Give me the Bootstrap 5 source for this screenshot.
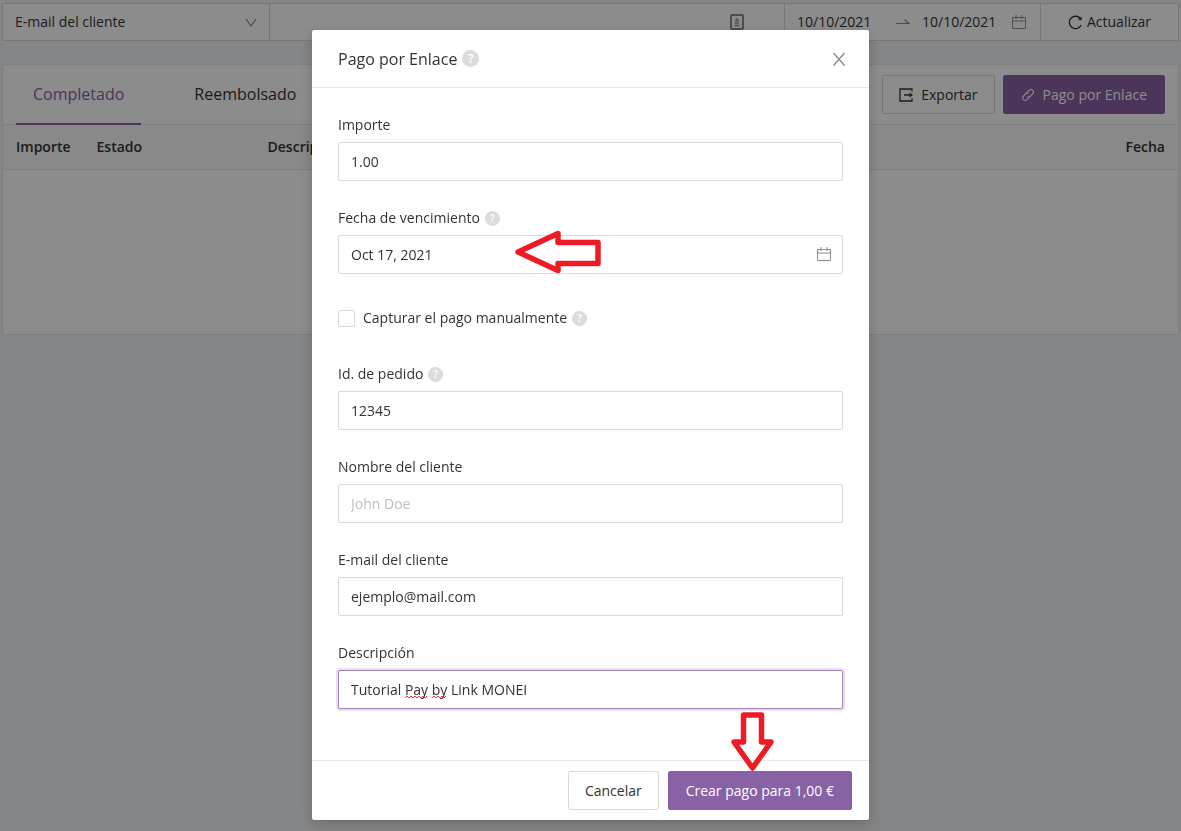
<!DOCTYPE html>
<html lang="es">
<head>
<meta charset="utf-8">
<meta name="viewport" content="width=device-width, initial-scale=1">
<title>Pago por Enlace</title>
<link href="https://cdn.jsdelivr.net/npm/bootstrap@5.3.0/dist/css/bootstrap.min.css" rel="stylesheet">
<style>
  :root { --brand: #8961a5; --line: #d9d9d9; --soft: #e8e8e8; --ink: #333; }
  body { background: #f0f2f5; color: var(--ink); font-family: "Open Sans", "Noto Sans", sans-serif; font-size: 14px; line-height: 24px; min-height: 100vh; }
  svg { display: block; flex: none; fill: none; stroke: currentColor; }
  .page-area { padding: 3px 2px; }

  /* Filter bar */
  .filter-bar { border: 1px solid var(--line); background: #fff; height: 38px; margin-bottom: 23px; }
  .filter-bar > * + * { border-left: 1px solid var(--line) !important; }
  .filter-bar input, .filter-bar select { border: 0; background: transparent; color: inherit; outline: 0; appearance: none; }
  .filter-field { width: 266px; }
  .filter-field select { padding: 0 12px; }
  .filter-field svg { position: absolute; right: 12px; top: 13px; color: #8c8c8c; pointer-events: none; }
  .filter-search { padding-right: 40px; }
  .filter-dates { width: 256px; padding: 0 12px; }
  .filter-dates input { width: 82px; padding: 0; }
  .filter-dates .range-arrow { margin: 0 12px 0 17px; }
  .filter-refresh { width: 138px; border: 0; background: transparent; color: inherit; }
  .grey-icon { color: #8c8c8c; }

  /* Payments panel */
  .panel { background: #fff; border: 1px solid var(--soft); border-radius: 2px; height: 271px; }
  .panel-head { border-bottom: 1px solid var(--soft); height: 60px; padding: 0 13px; }
  .tab-links { gap: 36px; }
  .tab-links a { color: inherit; font-size: 16px; line-height: 58px; padding: 0 17px; border-bottom: 2px solid transparent; text-decoration: none; }
  .tab-links a.active { color: var(--brand); border-color: var(--brand); }
  .pay-table th { background: #fafafa; border-bottom: 1px solid var(--soft); font-weight: 600; font-size: 14px; padding: 10px 13px; color: var(--ink); }
  .col-amount { width: 80px; }
  .col-state { width: 171px; }

  .btn-box { height: 39px; padding: 0 16px; border: 1px solid var(--line); border-radius: 2px; background: #fff; color: var(--ink); font-size: 14px; line-height: 24px; }
  .btn-box.solid, .btn-box.solid:hover { padding: 0 17px; background: var(--brand); border-color: var(--brand); color: #fff; }

  /* Dialog */
  .modal-backdrop { --bs-backdrop-opacity: .45; }
  .modal-dialog { max-width: 557px; margin: 30px auto 0; }
  .modal-content { border: 0; border-radius: 2px; color: var(--ink); box-shadow: 0 4px 14px rgba(0,0,0,.2); }
  .modal-header { height: 58px; padding: 0 23px 0 26px; border-color: var(--soft); border-radius: 0; }
  .modal-title { font-size: 16px; font-weight: 500; line-height: 24px; }
  .close-x { border: 0; background: transparent; padding: 0; color: #8c8c8c; }
  .modal-body { padding: 25px 26px 26px; }
  .modal-footer { padding: 10px 17px; gap: 9px; border-color: var(--soft); }
  .modal-footer > * { margin: 0; }
  .field { margin-bottom: 25px; }
  .field label { display: block; }
  .field .form-control { height: 39px; margin-top: 5px; padding: 0 12px; border: 1px solid var(--line); border-radius: 2px; font-size: 14px; color: var(--ink); box-shadow: none; }
  .field .form-control::placeholder { color: #bfbfbf; }
  .field .form-control.current { border-color: #a383b8; box-shadow: 0 0 0 2px rgba(137,97,165,.2); }
  .field-row { height: 38px; }
  .field-row .form-check-input { width: 17px; height: 17px; margin: 0; border: 1px solid var(--line); border-radius: 2px; }
  .hint { display: inline-flex; align-items: center; justify-content: center; width: 15px; height: 15px; border-radius: 50%; background: #dcdcdc; color: #fff; font-size: 10px; font-weight: 600; line-height: 15px; flex: none; margin-left: 1px; }
  .hint.large { width: 17px; height: 17px; font-size: 12px; }
  .date-icon { position: absolute; right: 12px; bottom: 13px; color: #8c8c8c; }
  .spelling { position: absolute; left: 67px; bottom: 10px; color: #f33; }
  .pointer-left { position: absolute; left: 176px; bottom: 0; color: #ed1c24; }
  .pointer-down { position: absolute; right: 95px; bottom: 49px; color: #ed1c24; }
</style>
</head>
<body>
<main class="page-area">
  <form class="filter-bar d-flex">
    <div class="filter-field position-relative">
      <select class="w-100 h-100" aria-label="Buscar por"><option>E-mail del cliente</option></select>
      <svg width="12" height="12" viewBox="0 0 12 12" stroke-width="1.2"><path d="M1 2l5 7 5-7"/></svg>
    </div>
    <div class="filter-search flex-fill d-flex align-items-center">
      <input class="flex-fill h-100 px-2" type="text" aria-label="Texto de búsqueda">
      <svg class="grey-icon" width="14" height="16" viewBox="0 0 14 16"><rect x="1" y="1" width="12" height="14" rx="1" stroke-width="2"/><path d="M7 4v3M5 6.500h4M5 9h4M4.500 11.500h5" stroke-width="1.400"/></svg>
    </div>
    <div class="filter-dates d-flex align-items-center">
      <input type="text" value="10/10/2021" aria-label="Desde">
      <svg class="grey-icon range-arrow" width="14" height="10" viewBox="0 0 14 10" stroke-width="1.200"><path d="M0 6.500h13L8.500 2.500"/></svg>
      <input type="text" value="10/10/2021" aria-label="Hasta">
      <svg class="grey-icon ms-2" width="14" height="14" viewBox="0 0 14 14"><path d="M.5 2.500h13v11H.5zM.5 6h13M4 0v4M10 0v4"/></svg>
    </div>
    <button class="filter-refresh d-flex align-items-center justify-content-center gap-1" type="button">
      <svg width="15" height="15" viewBox="0 0 15 15" stroke-width="1.400"><path d="M12.600 3.800A6.200 6.200 0 1 0 13.200 10"/><path d="M13.700 1.500l-.2 4-3.600-1.100z" fill="currentColor" stroke="none"/></svg>
      Actualizar
    </button>
  </form>

  <section class="panel">
    <div class="panel-head d-flex align-items-center justify-content-between">
      <nav class="tab-links d-flex">
        <a class="active" href="#">Completado</a>
        <a href="#">Reembolsado</a>
      </nav>
      <div class="d-flex gap-2">
        <button class="btn btn-box d-flex align-items-center gap-2" type="button">
          <svg width="14" height="14" viewBox="0 0 14 14" stroke-width="1.300"><path d="M13 3.500V1H1v12h12v-2.500M5 7h7"/><path d="M10.500 4.500L14 7l-3.500 2.500z" fill="currentColor" stroke="none"/></svg>
          Exportar
        </button>
        <button class="btn btn-box solid d-flex align-items-center gap-2" type="button">
          <svg width="14" height="14" viewBox="0 0 14 14" stroke-width="1.100"><path d="M5.200 5.200L8 2.400a2.500 2.500 0 0 1 3.600 3.600L9.400 8.200a2.500 2.500 0 0 1-3 .4M8.800 8.800L6 11.600A2.500 2.500 0 0 1 2.400 8l2.200-2.200a2.500 2.500 0 0 1 3-.4"/></svg>
          Pago por Enlace
        </button>
      </div>
    </div>
    <table class="pay-table w-100">
      <colgroup><col class="col-amount"><col class="col-state"><col><col></colgroup>
      <thead><tr><th scope="col">Importe</th><th scope="col">Estado</th><th scope="col">Descripción</th><th scope="col" class="text-end">Fecha</th></tr></thead>
    </table>
  </section>
</main>

<div class="modal-backdrop show"></div>
<div class="modal d-block" role="dialog" aria-modal="true" aria-labelledby="dialogTitle">
  <div class="modal-dialog">
    <form class="modal-content">
      <div class="modal-header">
        <div class="d-flex align-items-center gap-1">
          <h1 class="modal-title" id="dialogTitle">Pago por Enlace</h1>
          <span class="hint large">?</span>
        </div>
        <button class="close-x" type="button" aria-label="Cerrar">
          <svg width="14" height="14" viewBox="0 0 14 14" stroke-width="1.400"><path d="M1.500 1l11 12.500M12.500 1l-11 12.500"/></svg>
        </button>
      </div>
      <div class="modal-body">
        <div class="field">
          <label for="amount">Importe</label>
          <input class="form-control" id="amount" type="text" value="1.00">
        </div>
        <div class="field position-relative">
          <div class="d-flex align-items-center gap-1"><label for="due">Fecha de vencimiento</label><span class="hint">?</span></div>
          <input class="form-control" id="due" type="text" value="Oct 17, 2021">
          <svg class="date-icon" width="14" height="14" viewBox="0 0 14 14"><path d="M.5 2.500h13v11H.5zM.5 6h13M4 0v4M10 0v4"/></svg>
          <svg class="pointer-left" width="90" height="46" viewBox="0 0 90 46" stroke-width="5.500" stroke-linejoin="round"><path d="M4 24L44 5.500V14.500H84V35.500H44V42.500Z"/></svg>
        </div>
        <div class="field field-row d-flex align-items-center">
          <input class="form-check-input me-2" id="manual" type="checkbox">
          <label class="me-1" for="manual">Capturar el pago manualmente</label><span class="hint">?</span>
        </div>
        <div class="field">
          <div class="d-flex align-items-center gap-1"><label for="order">Id. de pedido</label><span class="hint">?</span></div>
          <input class="form-control" id="order" type="text" value="12345">
        </div>
        <div class="field">
          <label for="client">Nombre del cliente</label>
          <input class="form-control" id="client" type="text" placeholder="John Doe">
        </div>
        <div class="field">
          <label for="mail">E-mail del cliente</label>
          <input class="form-control" id="mail" type="email" value="ejemplo@mail.com">
        </div>
        <div class="field position-relative">
          <label for="about">Descripción</label>
          <input class="form-control current" id="about" type="text" value="Tutorial Pay by Link MONEI">
          <svg class="spelling" width="44" height="4" viewBox="0 0 44 4"><path d="M0 3l2-2 2 2 2-2 2 2 2-2 2 2 2-2 2 2 2-2 2 2 2-2M27 3l2-2 2 2 2-2 2 2 2-2 2 2 2-2"/></svg>
        </div>
      </div>
      <div class="modal-footer position-relative">
        <button class="btn btn-box" type="button">Cancelar</button>
        <button class="btn btn-box solid" type="submit">Crear pago para 1,00 €</button>
        <svg class="pointer-down" width="44" height="60" viewBox="0 0 44 60" stroke-width="5.500" stroke-linejoin="round"><path d="M13.500 4H31.500V31H41L22.500 57L4 31H13.500Z"/></svg>
      </div>
    </form>
  </div>
</div>
<script src="https://cdn.jsdelivr.net/npm/bootstrap@5.3.0/dist/js/bootstrap.bundle.min.js"></script>
</body>
</html>
